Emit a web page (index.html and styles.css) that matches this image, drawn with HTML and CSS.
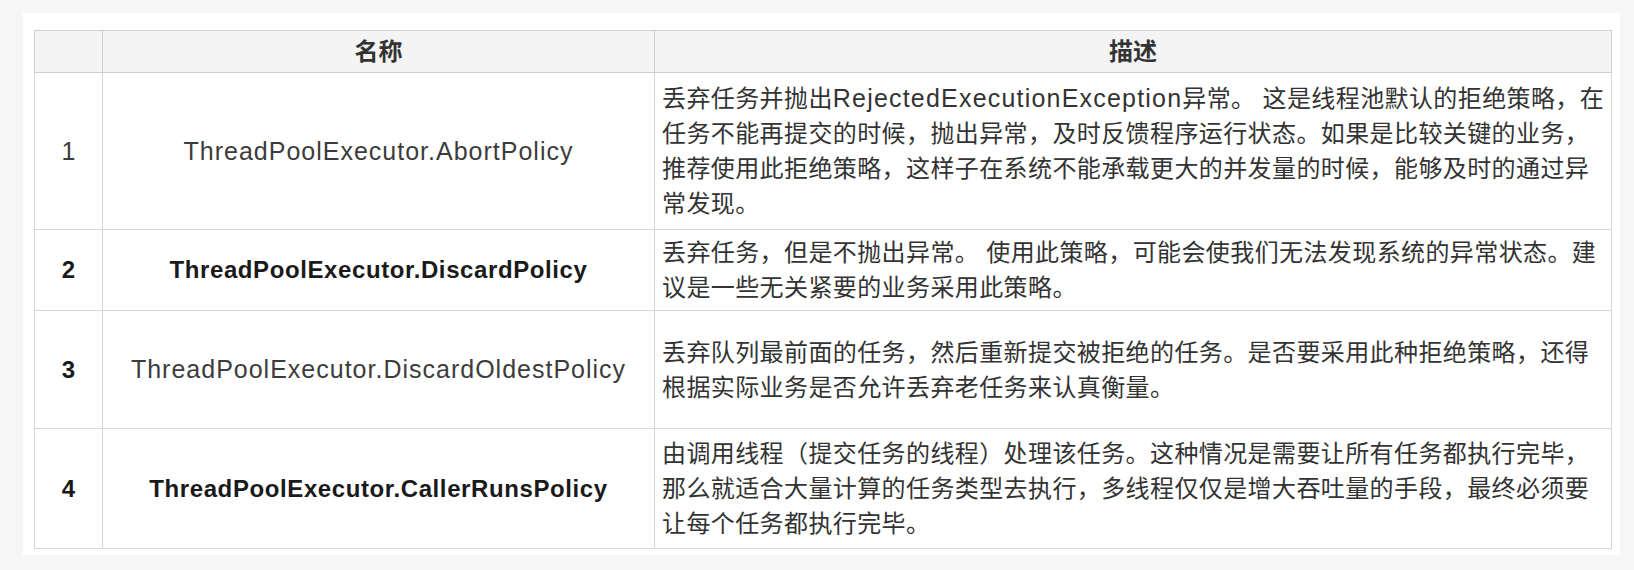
FILE: index.html
```html
<!DOCTYPE html>
<html lang="zh-CN">
<head>
<meta charset="utf-8">
<title>拒绝策略</title>
<link rel="stylesheet" href="styles.css">
</head>
<body>
<div class="card">
  <table class="policy">
    <colgroup>
      <col class="c-num">
      <col class="c-name">
      <col class="c-desc">
    </colgroup>
    <thead>
      <tr class="head">
        <th></th>
        <th>名称</th>
        <th>描述</th>
      </tr>
    </thead>
    <tbody>
      <tr class="r1">
        <td class="num light">1</td>
        <td class="name light">ThreadPoolExecutor.AbortPolicy</td>
        <td class="desc">丢弃任务并抛出<span class="en">RejectedExecutionException</span>异常。 这是线程池默认的拒绝策略，在<br>任务不能再提交的时候，抛出异常，及时反馈程序运行状态。如果是比较关键的业务，<br>推荐使用此拒绝策略，这样子在系统不能承载更大的并发量的时候，能够及时的通过异<br>常发现。</td>
      </tr>
      <tr class="r2">
        <td class="num strong">2</td>
        <td class="name strong">ThreadPoolExecutor.DiscardPolicy</td>
        <td class="desc">丢弃任务，但是不抛出异常。 使用此策略，可能会使我们无法发现系统的异常状态。建<br>议是一些无关紧要的业务采用此策略。</td>
      </tr>
      <tr class="r3">
        <td class="num strong">3</td>
        <td class="name light">ThreadPoolExecutor.DiscardOldestPolicy</td>
        <td class="desc">丢弃队列最前面的任务，然后重新提交被拒绝的任务。是否要采用此种拒绝策略，还得<br>根据实际业务是否允许丢弃老任务来认真衡量。</td>
      </tr>
      <tr class="r4">
        <td class="num strong">4</td>
        <td class="name strong">ThreadPoolExecutor.CallerRunsPolicy</td>
        <td class="desc">由调用线程（提交任务的线程）处理该任务。这种情况是需要让所有任务都执行完毕，<br>那么就适合大量计算的任务类型去执行，多线程仅仅是增大吞吐量的手段，最终必须要<br>让每个任务都执行完毕。</td>
      </tr>
    </tbody>
  </table>
</div>
</body>
</html>
```
FILE: styles.css
```css
html, body {
  margin: 0;
  padding: 0;
  background: #f6f6f6;
}
body {
  width: 1634px;
  height: 570px;
  overflow: hidden;
  font-family: "Liberation Sans", "Noto Sans CJK SC", sans-serif;
  color: #333;
}
.card {
  margin: 13px 0 0 23px;
  width: 1597px;
  height: 542px;
  box-sizing: border-box;
  background: #fff;
  padding: 17px 9px 0 11px;
}
.policy {
  border-collapse: collapse;
  table-layout: fixed;
  width: 1577px;
}
.c-num { width: 68px; }
.c-name { width: 552px; }
.c-desc { width: 957px; }
.policy th,
.policy td {
  border: 1px solid #d6d6d6;
  padding: 0;
  vertical-align: middle;
}
.policy thead th {
  border-color: #cfcfcf;
}
.head {
  height: 42px;
  background: #f4f4f4;
}
.head th {
  font-size: 24px;
  font-weight: 700;
  color: #333;
  text-align: center;
  line-height: 30px;
}
.r1 { height: 157px; }
.r2 { height: 81px; }
.r3 { height: 118px; }
.r4 { height: 120px; }
.num {
  text-align: center;
  font-size: 24px;
}
.name {
  text-align: center;
  white-space: nowrap;
}
.light {
  font-weight: 400;
  color: #3c3c3c;
}
.name.light {
  font-size: 25px;
  letter-spacing: 1px;
}
.num.light {
  font-size: 25px;
}
.strong {
  font-weight: 700;
  color: #1a1a1a;
}
.name.strong {
  font-size: 24px;
  letter-spacing: 0.6px;
}
.desc {
  font-size: 24px;
  letter-spacing: 0.4px;
  line-height: 35px;
  padding: 0 4px 0 7px !important;
  color: #333;
  white-space: nowrap;
}
.en {
  font-size: 25px;
  letter-spacing: 1.2px;
}
```
